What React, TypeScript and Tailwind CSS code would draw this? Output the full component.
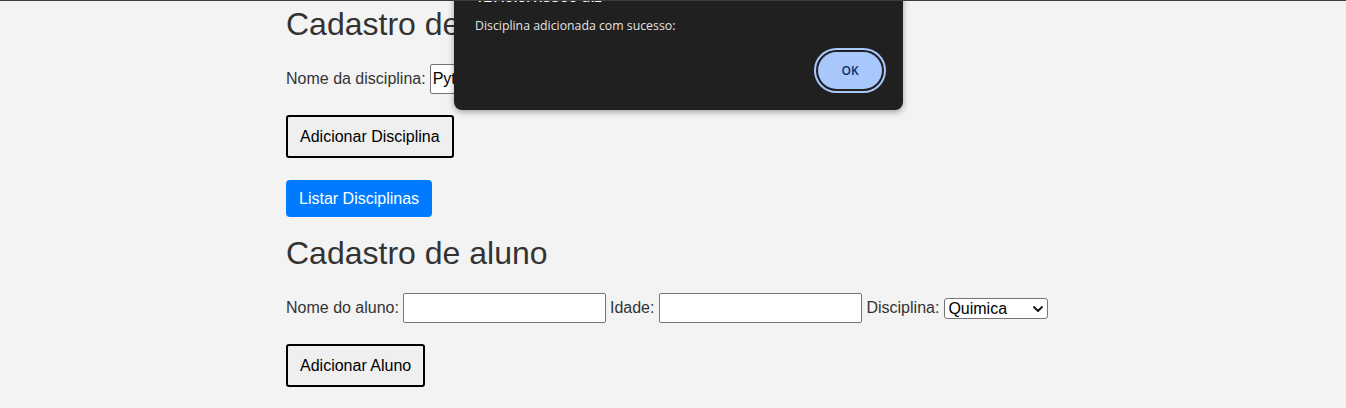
import React from "react";

function Chevron() {
  return (
    <svg
      width="10"
      height="6"
      viewBox="0 0 10 6"
      className="pointer-events-none absolute right-[5px] top-[8px]"
    >
      <path d="M1 1l4 4 4-4" fill="none" stroke="#111" strokeWidth="1.8" strokeLinecap="round" strokeLinejoin="round" />
    </svg>
  );
}

export default function App() {
  return (
    <div className="relative min-h-screen overflow-hidden border-t border-[#3c3c3c] bg-[#f3f3f3] font-['Liberation_Sans',Arial,sans-serif] text-[#333]">
      <div className="pl-[286px] pt-[5px]">
        <h1 className="text-[32px] leading-[37px] font-normal">Cadastro de disciplina</h1>

        <div className="mt-[21px] flex h-[30px] items-center gap-[4px] text-[16px]">
          <label>Nome da disciplina:</label>
          <input
            defaultValue="Python"
            className="h-[30px] w-[203px] rounded-[2px] border border-[#767676] bg-white px-[2px] text-[16px] text-black"
          />
        </div>

        <button className="mt-[21px] block rounded-[3px] border-2 border-black bg-[#efefef] px-3 py-[10px] text-[16px] leading-[19px] text-black">
          Adicionar Disciplina
        </button>

        <button className="mt-[22px] block rounded-[4px] bg-[#007bff] px-[13px] py-[9px] text-[16px] leading-[19px] text-white">
          Listar Disciplinas
        </button>

        <h2 className="mt-[18px] text-[32px] leading-[37px] font-normal">Cadastro de aluno</h2>

        <div className="mt-[21px] flex h-[30px] items-center gap-[4px] text-[16px]">
          <label>Nome do aluno:</label>
          <input className="h-[30px] w-[203px] rounded-[2px] border border-[#767676] bg-white px-[2px] text-black" />
          <label>Idade:</label>
          <input className="ml-[1px] h-[30px] w-[203px] rounded-[2px] border border-[#767676] bg-white px-[2px] text-black" />
          <label>Disciplina:</label>
          <div className="relative ml-[1px]">
            <select
              defaultValue="Quimica"
              className="block h-[21px] w-[104px] appearance-none rounded-[3px] border border-[#767676] bg-white pl-[3px] text-[16px] leading-[19px] text-black"
            >
              <option>Python</option>
              <option>Quimica</option>
            </select>
            <Chevron />
          </div>
        </div>

        <button className="mt-[21px] block rounded-[3px] border-2 border-black bg-[#efefef] px-3 py-[10px] text-[16px] leading-[19px] text-black">
          Adicionar Aluno
        </button>
      </div>

      {/* alert do navegador */}
      <div className="absolute left-[454px] top-[-30px] w-[449px] h-[139px] rounded-[8px] bg-[#202020] px-[21px] pt-[15px] shadow-[0_2px_6px_rgba(0,0,0,0.35)] font-['Open_Sans','Noto_Sans',sans-serif]">
        <div className="text-[15px] leading-[20px] font-semibold text-white">127.0.0.1:5500 diz</div>
        <p className="mt-[12px] text-[12.3px] leading-[16px] text-[#e3e3e3]">Disciplina adicionada com sucesso:</p>
        <div className="mt-[18px] flex justify-end">
          <button className="h-[37px] w-[64px] rounded-full bg-[#a8c7fa] text-[12px] font-semibold text-[#062e6f] outline-2 outline-offset-2 outline-[#a8c7fa]">
            OK
          </button>
        </div>
      </div>
    </div>
  );
}
